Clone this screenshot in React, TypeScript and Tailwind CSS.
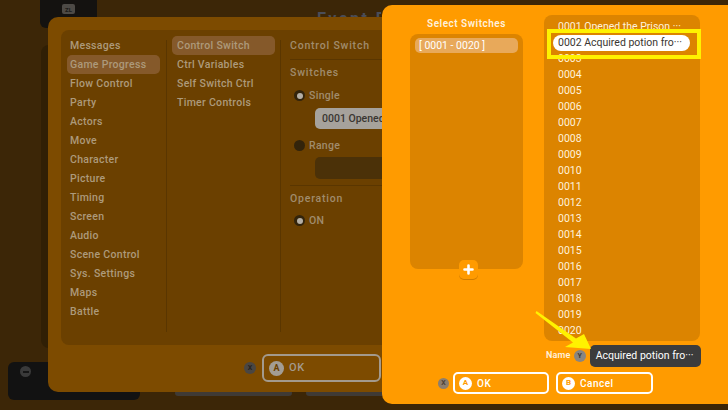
import clsx from 'clsx';

const categories = [
  'Messages',
  'Game Progress',
  'Flow Control',
  'Party',
  'Actors',
  'Move',
  'Character',
  'Picture',
  'Timing',
  'Screen',
  'Audio',
  'Scene Control',
  'Sys. Settings',
  'Maps',
  'Battle',
];

const commands = ['Control Switch', 'Ctrl Variables', 'Self Switch Ctrl', 'Timer Controls'];

const switchNames: Record<number, string> = {
  1: 'Opened the Prison ···',
  2: 'Acquired potion fro···',
};

const switches = Array.from({ length: 20 }, (_, i) => {
  const id = String(i + 1).padStart(4, '0');
  return switchNames[i + 1] ? `${id} ${switchNames[i + 1]}` : id;
});

// round controller button glyph (A / B / X / Y)
function PadKey({ label, className }: { label: string; className?: string }) {
  return (
    <span
      className={clsx(
        'flex shrink-0 items-center justify-center rounded-full font-bold leading-none',
        className
      )}
    >
      {label}
    </span>
  );
}

function Radio({ on }: { on?: boolean }) {
  return (
    <span className="ml-[4px] flex h-[11px] w-[11px] items-center justify-center rounded-full bg-[#33240b]">
      {on && <span className="h-[6px] w-[6px] rounded-full bg-[#b5afa5]" />}
    </span>
  );
}

function EventEditor() {
  return (
    <div className="absolute left-[48px] top-[17px] flex h-[375px] w-[360px] flex-col rounded-[10px] bg-[#7d4b00] p-[13px] pb-[10px]">
      <div className="flex h-[315px] rounded-[8px] bg-[#6b4000] text-[10.5px] font-medium tracking-[0.3px] text-[#ad9a7b]">
        <ul className="w-[105px] px-[6px] pt-[6px]">
          {categories.map((c) => (
            <li
              key={c}
              className={clsx(
                'h-[19px] rounded-[5px] pl-[3px] leading-[19px]',
                c === 'Game Progress' && 'bg-[#85592a]'
              )}
            >
              {c}
            </li>
          ))}
        </ul>
        <div className="mb-[13px] mt-[10px] w-px bg-[#5a3600]" />
        <ul className="w-[113px] px-[5px] pt-[6px]">
          {commands.map((c) => (
            <li
              key={c}
              className={clsx(
                'h-[19px] rounded-[5px] pl-[5px] leading-[19px]',
                c === 'Control Switch' && 'bg-[#85592a]'
              )}
            >
              {c}
            </li>
          ))}
        </ul>
        <div className="mb-[13px] mt-[10px] w-px bg-[#5a3600]" />
        <div className="flex flex-1 flex-col pl-[9px] pt-[6px] text-[#a08c6d]">
          <div className="h-[19px] leading-[19px] tracking-[0.8px]">Control Switch</div>
          <div className="mt-[4px] h-px bg-[#5a3600]" />
          <div className="mt-[3px] h-[19px] leading-[19px] tracking-[0.8px]">Switches</div>
          <div className="mt-[4px] flex h-[19px] items-center gap-[4px]">
            <Radio on />
            <span>Single</span>
          </div>
          <div className="ml-[25px] mt-[3px] h-[21px] rounded-l-[5px] bg-[#a6a29c] pl-[7px] text-[10.5px] leading-[21px] tracking-normal text-[#3a3631]">
            0001 Opened
          </div>
          <div className="mt-[7px] flex h-[19px] items-center gap-[4px]">
            <Radio />
            <span>Range</span>
          </div>
          <div className="ml-[25px] mt-[2px] flex h-[22px] items-center justify-end rounded-l-[5px] bg-[#4b3108] pr-[2px] text-[#8a7a62]">
            ÷
          </div>
          <div className="mt-[6px] h-px bg-[#5a3600]" />
          <div className="mt-[3px] h-[19px] leading-[19px] tracking-[0.8px]">Operation</div>
          <div className="mt-[3px] flex h-[19px] items-center gap-[4px]">
            <Radio on />
            <span>ON</span>
          </div>
        </div>
      </div>

      <div className="mt-[9px] flex items-center pl-[183px]">
        <PadKey label="X" className="h-[12px] w-[12px] bg-[#4a4642] text-[7px] text-[#25221f]" />
        <div className="ml-[6px] flex h-[28px] w-[119px] items-center rounded-[6px] border-2 border-[#a39a8d] pl-[5px]">
          <PadKey label="A" className="h-[15px] w-[15px] bg-[#a39d94] text-[9px] text-[#6b4000]" />
          <span className="ml-[5px] text-[11px] font-medium tracking-[0.6px] text-[#a39a8d]">OK</span>
        </div>
      </div>
    </div>
  );
}

function SelectSwitches() {
  return (
    <div className="absolute left-[382px] top-[5px] flex h-[399px] w-[360px] flex-col rounded-[10px] bg-[#ff9b00] pt-[10px]">
      <div className="flex pl-[28px]">
        <div className="flex w-[113px] flex-col">
          <div className="mt-[2px] h-[14px] text-center text-[10px] font-semibold leading-[14px] tracking-[0.5px] text-[#fff1dc]">
            Select Switches
          </div>
          <div className="mt-[3px] h-[235px] rounded-[8px] bg-[#dc8400] px-[5px] pt-[4px]">
            <div className="h-[15px] rounded-[5px] bg-[#e8a95a] pl-[4px] text-[10.5px] leading-[15px] text-white">
              [ 0001 - 0020 ]
            </div>
          </div>
          <button className="relative mx-auto -mt-[9px] flex h-[19px] w-[19px] translate-x-[2px] items-center justify-center rounded-[5px] bg-[#ff9b00] shadow-[0_1px_0_#d07c00]">
            <svg width="11" height="11" viewBox="0 0 11 11">
              <path d="M5.5 1.5v8M1.5 5.5h8" stroke="#fff" strokeWidth="2.6" strokeLinecap="round" />
            </svg>
          </button>
        </div>

        <ul className="ml-[21px] h-[326px] w-[156px] rounded-[8px] bg-[#dc8400] pl-[9px] pt-[4px] text-[10.5px] text-[#fff2dc]">
          {switches.map((s, i) =>
            i === 1 ? (
              <li key={s} className="h-[16px] w-[137px] rounded-full bg-white pl-[5px] leading-[16px] text-[#3a3631]">
                {s}
              </li>
            ) : (
              <li key={s} className="h-[16px] pl-[5px] leading-[16px]">
                {s}
              </li>
            )
          )}
        </ul>
      </div>

      <div className="ml-[164px] mt-[4px] flex items-center">
        <span className="text-[9px] font-semibold tracking-[0.2px] text-[#fff1dc]">Name</span>
        <PadKey label="Y" className="ml-[3px] h-[12px] w-[12px] bg-[#8a8580] text-[7px] text-[#3b3835]" />
        <div className="ml-[4px] h-[22px] w-[111px] overflow-hidden whitespace-nowrap rounded-[5px] bg-[#3c3c3c] pl-[6px] text-[10.5px] leading-[22px] text-white">
          Acquired potion fro···
        </div>
      </div>

      <div className="ml-[56px] mt-[5px] flex items-center">
        <PadKey label="X" className="h-[11px] w-[11px] bg-[#8c7e6e] text-[7px] text-[#4b4036]" />
        <div className="ml-[4px] flex h-[22px] w-[96px] items-center rounded-[5px] border-2 border-white pl-[4px]">
          <PadKey label="A" className="h-[13px] w-[13px] bg-white text-[8px] text-[#ff9b00]" />
          <span className="ml-[5px] text-[10px] font-medium tracking-[0.5px] text-white">OK</span>
        </div>
        <div className="ml-[7px] flex h-[22px] w-[97px] items-center rounded-[5px] border-2 border-white pl-[4px]">
          <PadKey label="B" className="h-[13px] w-[13px] bg-white text-[8px] text-[#ff9b00]" />
          <span className="ml-[5px] text-[10px] font-medium tracking-[0.5px] text-white">Cancel</span>
        </div>
      </div>

      {/* focus frame around the picked switch */}
      <div className="absolute left-[165px] top-[24px] h-[30px] w-[154px] border-[4px] border-[#fff200]" />
    </div>
  );
}

export default function App() {
  return (
    <div className="relative h-[410px] w-[728px] overflow-hidden bg-[#3c2607] font-['Roboto',sans-serif]">
      {/* background windows */}
      <div className="absolute left-[40px] top-0 h-[28px] w-[57px] rounded-b-[6px] bg-[#141210]">
        <span className="absolute left-[22px] top-[4px] flex h-[10px] w-[13px] items-center justify-center rounded-[2px] bg-[#4d4a46] text-[6px] font-bold text-[#1c1a18]">
          ZL
        </span>
      </div>
      <div className="absolute left-[41px] top-[45px] h-[303px] w-[120px] rounded-[8px] bg-[#301f05]" />
      <div className="absolute left-[8px] top-[362px] h-[38px] w-[132px] rounded-[6px] bg-[#121212]">
        <span className="absolute left-[12px] top-[4px] flex h-[11px] w-[11px] items-center justify-center rounded-full bg-[#3a3a3a]">
          <span className="h-[2px] w-[6px] bg-[#161616]" />
        </span>
      </div>
      <div className="absolute left-[175px] top-[390px] h-[6px] w-[117px] rounded-[3px] bg-[#3f3a35]" />
      <div className="absolute left-[306px] top-[390px] h-[6px] w-[90px] rounded-[3px] bg-[#3f3a35]" />
      <div className="absolute left-[317px] top-[7px] w-[64px] overflow-hidden whitespace-nowrap text-[16px] font-bold tracking-[2.5px] text-[#4a4d58]">
        Event Editor
      </div>

      <EventEditor />
      <SelectSwitches />

      {/* pointer to the name field */}
      <svg className="pointer-events-none absolute left-0 top-0" width="728" height="410">
        <polygon
          points="536.5,311 576,338.5 584,334 591,349 565,347 573,342.5 535.5,313"
          fill="#fff200"
        />
      </svg>
    </div>
  );
}
